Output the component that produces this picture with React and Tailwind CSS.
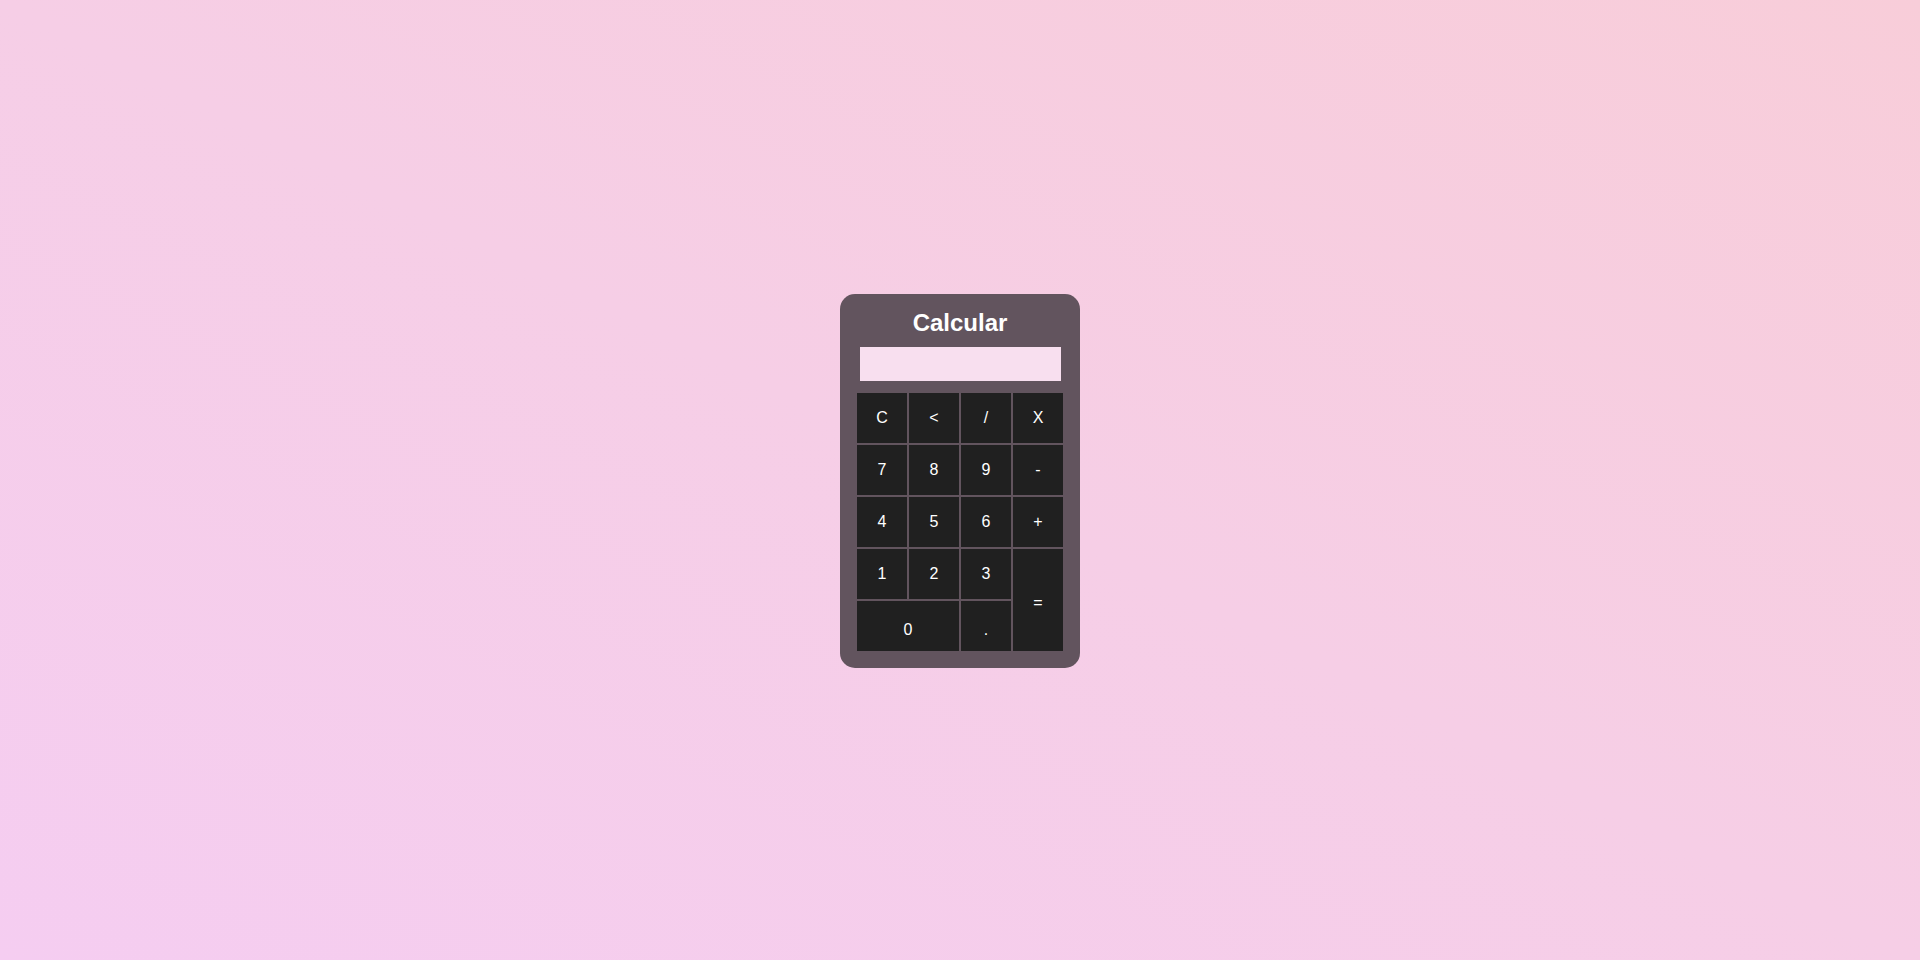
import React, { useState } from 'react';

const keys = [
  { label: 'C', cls: '' },
  { label: '<', cls: '' },
  { label: '/', cls: '' },
  { label: 'X', cls: '' },
  { label: '7', cls: '' },
  { label: '8', cls: '' },
  { label: '9', cls: '' },
  { label: '-', cls: '' },
  { label: '4', cls: '' },
  { label: '5', cls: '' },
  { label: '6', cls: '' },
  { label: '+', cls: '' },
  { label: '1', cls: '' },
  { label: '2', cls: '' },
  { label: '3', cls: '' },
  { label: '=', cls: 'row-span-2 h-auto pt-[6px]' },
  { label: '0', cls: 'col-span-2 text-[13px] pt-[8px]' },
  { label: '.', cls: 'text-[12px] pt-[8px]' },
];

const App = () => {
  const [value, setValue] = useState('');

  const handleKey = (k) => {
    if (k === 'C') return setValue('');
    if (k === '<') return setValue((v) => v.slice(0, -1));
    if (k === '=') {
      try {
        // eslint-disable-next-line no-new-func
        const result = Function(`return (${value.replace(/X/g, '*')})`)();
        setValue(String(result));
      } catch (e) {
        setValue('');
      }
      return;
    }
    setValue((v) => v + k);
  };

  return (
    <div className="h-screen w-full flex items-center justify-center bg-[linear-gradient(to_top_right,#f5cdf1,#f6cee6_50%,#f8cdd9)] font-['Liberation_Sans',Arial,sans-serif]">
      <div className="mt-[2px] w-[240px] rounded-[15px] bg-[#62545e] pt-[15px] pb-[17px] px-[17px]">
        <h1 className="text-center text-white font-bold text-[24px] leading-[28px]">Calcular</h1>
        <input
          type="text"
          readOnly
          value={value}
          className="block mt-[10px] mx-[3px] w-[201px] h-[34px] bg-[#f8dfef] text-right px-2 text-lg text-[#333] outline-none"
        />
        <div className="mt-[12px] grid grid-cols-4 gap-[2px]">
          {keys.map((k) => (
            <button
              key={k.label}
              type="button"
              onClick={() => handleKey(k.label)}
              className={`h-[50px] bg-[#202020] text-white text-[16px] flex items-center justify-center ${k.cls}`}
            >
              {k.label}
            </button>
          ))}
        </div>
      </div>
    </div>
  );
};

export default App;
